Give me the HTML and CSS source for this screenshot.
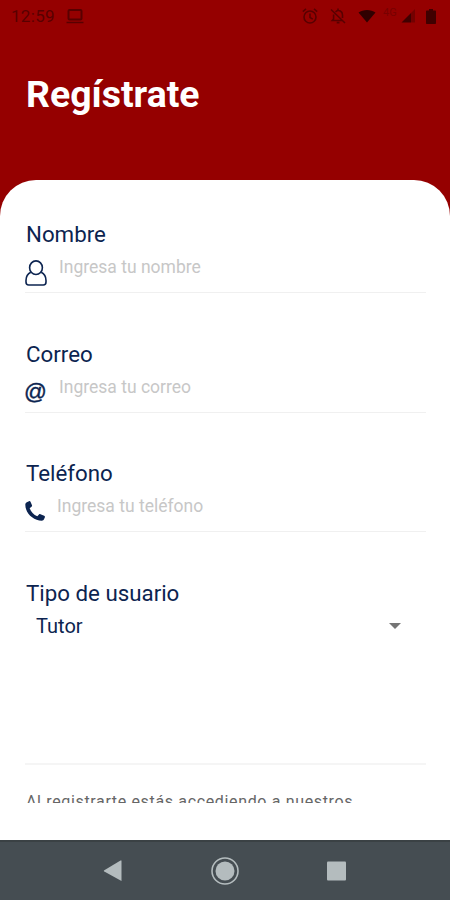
FILE: index.html
```html
<!DOCTYPE html>
<html lang="es">
<head>
    <meta charset="UTF-8">
    <meta name="viewport" content="width=device-width, initial-scale=1.0">
    <title>Regístrate</title>
    <link rel="stylesheet" href="styles.css">
</head>
<body>
    <div class="status-bar">
        <span class="clock">12:59</span>
        <svg class="cast" width="18" height="16" viewBox="0 0 18 16" fill="none" stroke="currentColor" stroke-width="2">
            <rect x="2.5" y="2" width="13" height="9.5" rx="1"/>
            <path d="M0.500 14.500h17" stroke-width="1.500"/>
        </svg>
        <div class="status-icons">
            <svg width="16" height="16" viewBox="0 0 16 16" fill="none" stroke="currentColor" stroke-width="1.6">
                <circle cx="8" cy="9" r="6"/>
                <path d="M8 5.500v4l2.800 1.600M0.800 3.600l3.200-2.700M15.200 3.600l-3.200-2.700"/>
            </svg>
            <svg class="bell" width="16" height="16" viewBox="0 0 16 16" fill="none" stroke="currentColor" stroke-width="1.6">
                <path d="M5.500 3.800C9 1 12.500 3.500 12.500 7v3M3.600 6.500V11L2.300 12.500h10M1 1.500l14 13.500M6.700 14.600h2.800M8 0.500v2"/>
            </svg>
            <svg class="wifi" width="18" height="14" viewBox="0 0 18 14" fill="currentColor">
                <path d="M9 13.500L0.500 3.500C5 0 13 0 17.500 3.500z"/>
            </svg>
            <span class="network">4G</span>
            <svg class="signal" width="15" height="14" viewBox="0 0 15 14" fill="currentColor">
                <path d="M0.500 13.500L10 4v9.500z"/>
                <path d="M10 4l4-4v13.500h-4z" opacity="0.400"/>
            </svg>
            <svg class="battery" width="10" height="15" viewBox="0 0 10 15" fill="currentColor">
                <path d="M3 0h4v1.500h2c0.600 0 1 0.400 1 1V14c0 0.600-0.400 1-1 1H1c-0.600 0-1-0.400-1-1V2.500c0-0.600 0.400-1 1-1h2z"/>
            </svg>
        </div>
    </div>

    <header>
        <h1>Regístrate</h1>
    </header>

    <main class="card">
        <form class="form">
            <div class="field">
                <label for="nombre">Nombre</label>
                <div class="input-row">
                    <svg class="icon" width="22" height="26" viewBox="0 0 22 26" fill="none" stroke="currentColor" stroke-width="1.6">
                        <path d="M5.800 12.200C2.800 13.600 1 16.800 1 20.500V22C1 24 2 25 3.700 25h14.600c1.700 0 2.700-1 2.700-3v-1.500c0-3.700-1.800-6.900-4.800-8.300"/>
                        <ellipse cx="11" cy="7.700" rx="6.400" ry="6.800"/>
                    </svg>
                    <input type="text" id="nombre" placeholder="Ingresa tu nombre">
                </div>
            </div>

            <div class="field">
                <label for="correo">Correo</label>
                <div class="input-row">
                    <span class="icon at">@</span>
                    <input type="text" id="correo" placeholder="Ingresa tu correo">
                </div>
            </div>

            <div class="field">
                <label for="telefono">Teléfono</label>
                <div class="input-row phone">
                    <svg class="icon" width="20" height="20" viewBox="0 0 20 20" fill="currentColor">
                        <path d="M1.800 1.200L4 0.200c0.600-0.300 1.200 0 1.500 0.500l1.500 3.600c0.200 0.600 0 1.200-0.500 1.500L4.700 7.200c1.200 3.700 4 6.600 7.600 8l1.700-1.700c0.400-0.400 0.900-0.500 1.400-0.300l3.800 1.500c0.600 0.300 0.900 0.900 0.700 1.500l-0.900 2.100c-0.300 0.900-1.100 1.400-2.200 1.500C8.500 19.800 0.400 12.500 0.300 3.800c0-1.200 0.500-2.200 1.500-2.600z"/>
                    </svg>
                    <input type="text" id="telefono" placeholder="Ingresa tu teléfono">
                </div>
            </div>

            <div class="field field-select">
                <label>Tipo de usuario</label>
                <div class="select">
                    <span>Tutor</span>
                    <svg width="12" height="6" viewBox="0 0 12 6" fill="#757575"><path d="M0 0h12L6 6z"/></svg>
                </div>
            </div>

            <p class="terms">Al registrarte estás accediendo a nuestros</p>
        </form>
    </main>

    <nav class="nav-bar">
        <svg width="20" height="22" viewBox="0 0 20 22" fill="#b4bcbe"><path d="M18.500 0.500v20.500L1.300 11.600c-0.600-0.400-0.600-1 0-1.400L17.500 0.500z"/></svg>
        <svg width="28" height="28" viewBox="0 0 28 28">
            <circle cx="14" cy="14" r="13" fill="none" stroke="#b4bcbe" stroke-width="1.6"/>
            <circle cx="14" cy="14" r="9.500" fill="#b4bcbe"/>
        </svg>
        <svg width="20" height="20" viewBox="0 0 20 20" fill="#b4bcbe"><rect x="0" y="0.500" width="19" height="19" rx="1"/></svg>
    </nav>
</body>
</html>
```

FILE: styles.css
```css
* {
    box-sizing: border-box;
}
body {
    margin: 0;
    height: 900px;
    display: flex;
    flex-direction: column;
    overflow: hidden;
    background-color: #950000;
    font-family: Roboto, sans-serif;
    color: #0c2450;
}
.status-bar {
    height: 32px;
    padding: 0 14px 0 11px;
    display: flex;
    align-items: center;
    color: #580000;
}
.clock {
    width: 55px;
    font-size: 17px;
    letter-spacing: 0.3px;
}
.status-icons {
    margin-left: auto;
    display: flex;
    align-items: center;
}
.bell {
    margin-left: 12px;
}
.wifi {
    margin-left: 12px;
    color: #300000;
}
.network {
    width: 18px;
    margin: -8px 0 0 7px;
    font-size: 11px;
    color: #780000;
}
.signal {
    color: #400000;
}
.battery {
    margin-left: 10px;
    color: #400000;
}
header {
    height: 148px;
    padding: 39px 26px 0;
}
h1 {
    margin: 0;
    font-size: 37.4px;
    line-height: 46px;
    font-weight: bold;
    color: #fff;
}
.card {
    height: 660px;
    background-color: #fff;
    border-radius: 36px 36px 0 0;
}
.form {
    height: 623px;
    padding: 40px 24px 0 25px;
    overflow: hidden;
}
.field {
    height: 119.7px;
}
label {
    display: block;
    height: 28px;
    padding-left: 1px;
    font-size: 22.3px;
    line-height: 28px;
}
.input-row {
    height: 45px;
    display: flex;
    align-items: flex-start;
    border-bottom: 1px solid #f0f0f0;
}
.icon {
    flex: none;
    margin-top: 12px;
}
.at {
    width: 22px;
    margin: 11px 0 0 -1px;
    padding-right: 1px;
    font-family: "Liberation Sans", Arial, sans-serif;
    font-size: 22.5px;
    line-height: 26px;
    -webkit-text-stroke: 0.4px #0c2450;
}
.at + input {
    margin-left: 13px;
}
.phone .icon {
    margin-top: 14px;
}
input {
    flex: 1;
    min-width: 0;
    height: 24px;
    margin: 7px 0 0 12px;
    padding: 0;
    border: none;
    outline: none;
    background: none;
    font-family: inherit;
    font-size: 17.5px;
    color: inherit;
}
input::placeholder {
    color: #c7c7c7;
}
.field-select {
    height: 186px;
    border-bottom: 2px solid #f5f5f5;
}
.select {
    height: 38px;
    padding: 0 25px 0 11px;
    display: flex;
    align-items: center;
    justify-content: space-between;
    font-size: 20px;
}
.terms {
    margin: 26px 0 0 1px;
    font-size: 16px;
    line-height: 22px;
    letter-spacing: 0.65px;
    white-space: nowrap;
    color: #666;
}
.nav-bar {
    height: 60px;
    padding: 0 103px;
    display: flex;
    align-items: center;
    justify-content: space-between;
    background-color: #454d52;
    border-top: 2px solid #3a4144;
}
```
